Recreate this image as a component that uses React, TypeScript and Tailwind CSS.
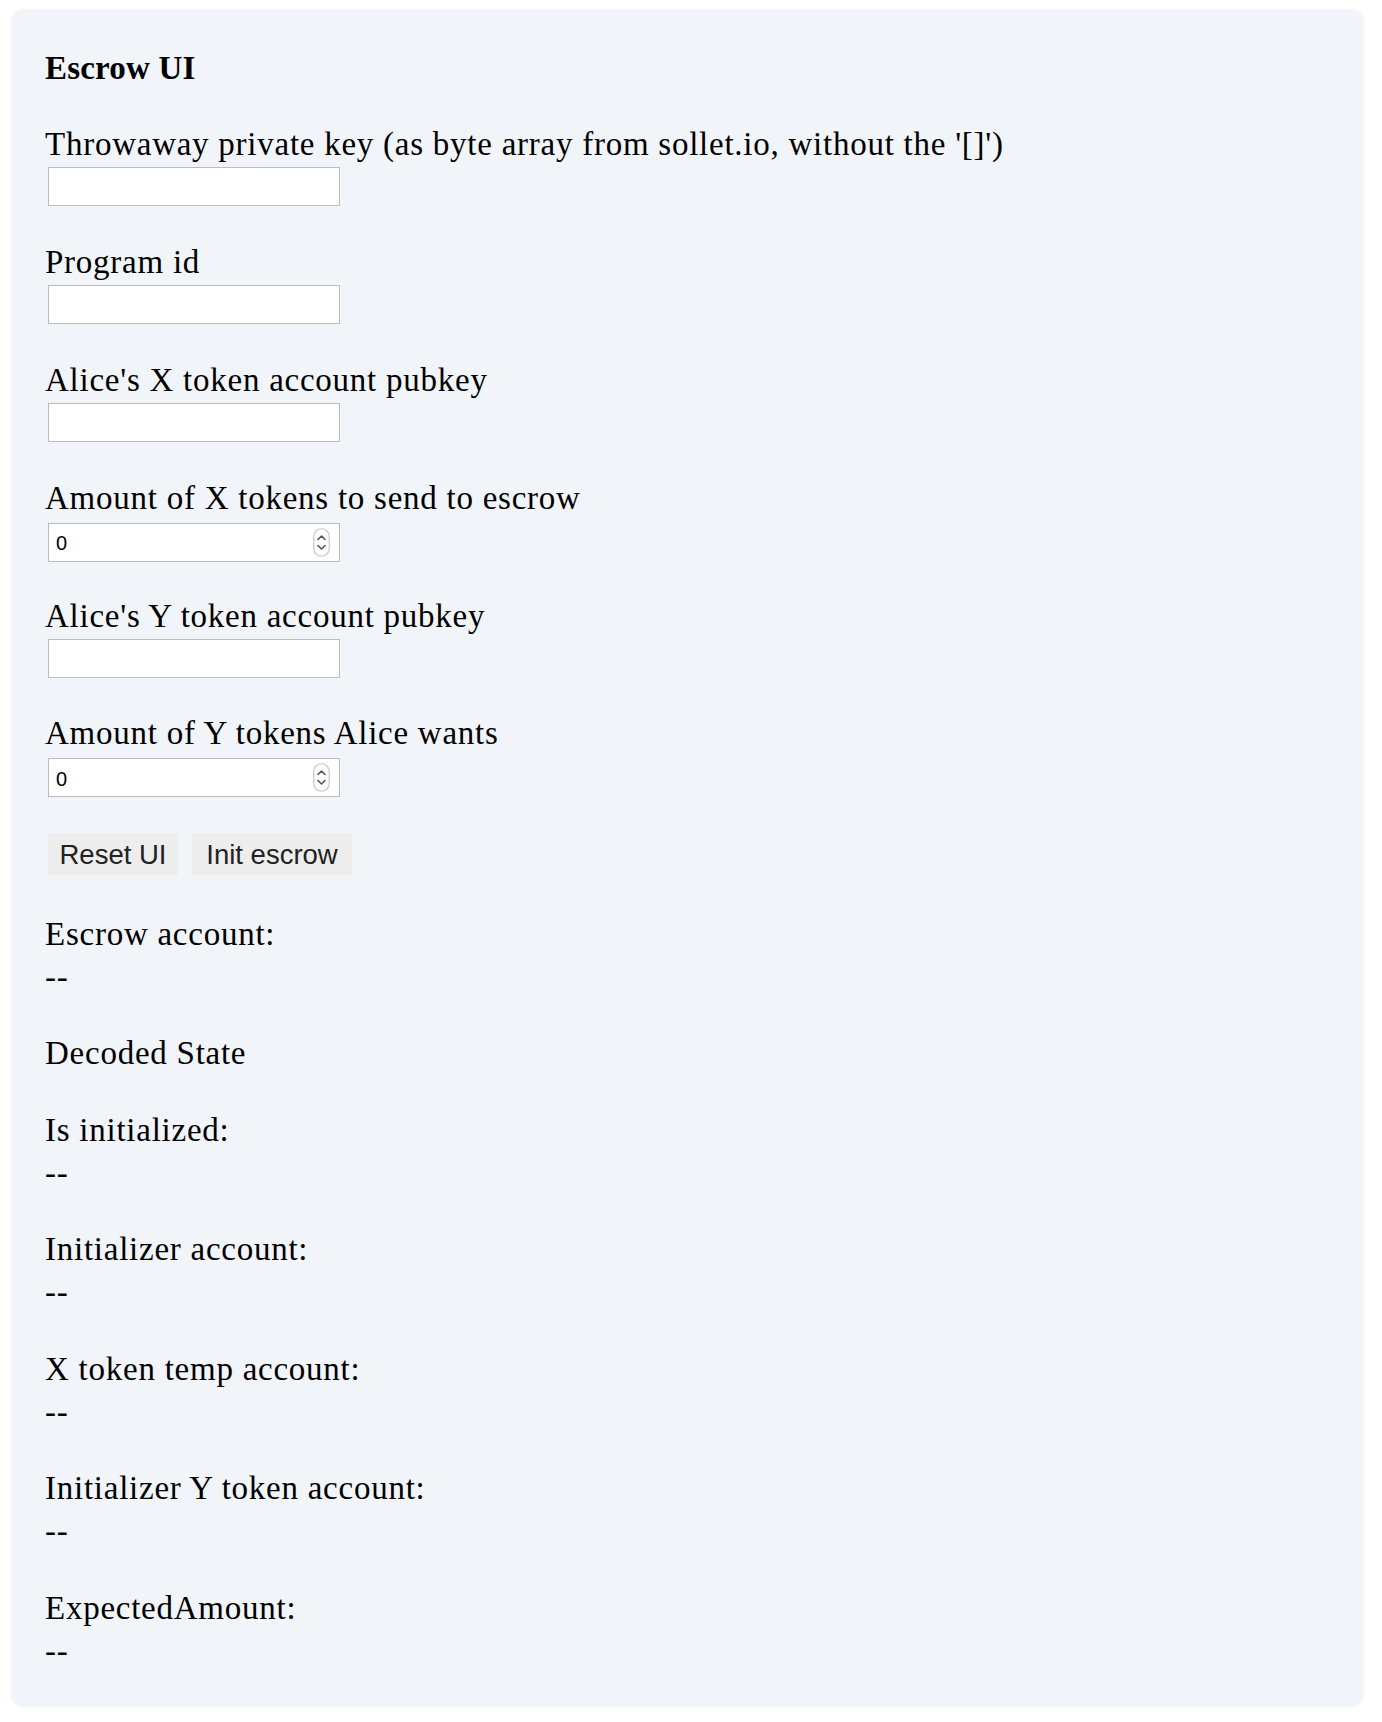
import React from "react";

const serif = { fontFamily: '"Liberation Serif", "Times New Roman", serif' };

const labelCls = "h-[36px] text-[33px] leading-[36px] tracking-[0.75px] text-black whitespace-nowrap";

function TextField({ label }: { label: string }) {
  return (
    <div className="mb-[37.9px]">
      <div className={labelCls}>{label}</div>
      <input
        type="text"
        className="mt-[5px] ml-[3px] block h-[39px] w-[292px] border border-[#bcbcbc] bg-white outline-none"
      />
    </div>
  );
}

function NumberField({ label }: { label: string }) {
  return (
    <div className="mb-[35.9px]">
      <div className={labelCls}>{label}</div>
      <div className="mt-[7px] ml-[3px] flex h-[39px] w-[292px] items-center border border-[#bcbcbc] bg-white">
        <input
          type="text"
          defaultValue="0"
          className="h-full min-w-0 flex-1 bg-transparent pl-[7px] pt-[3px] text-[20px] text-black outline-none"
          style={{ fontFamily: '"Liberation Sans", Arial, sans-serif' }}
        />
        <svg width="17" height="29" viewBox="0 0 17 29" className="mr-[9px] shrink-0">
          <rect x="0.75" y="0.75" width="15.5" height="27.5" rx="7.75" fill="#ffffff" stroke="#c9c9c9" strokeWidth="1.2" />
          <path d="M5 11.5 L8.5 8 L12 11.5" fill="none" stroke="#555555" strokeWidth="1.6" strokeLinecap="round" strokeLinejoin="round" />
          <path d="M5 17.5 L8.5 21 L12 17.5" fill="none" stroke="#555555" strokeWidth="1.6" strokeLinecap="round" strokeLinejoin="round" />
        </svg>
      </div>
    </div>
  );
}

function Info({ label, first }: { label: string; first?: boolean }) {
  return (
    <div className={first ? "" : "mt-[40.5px]"}>
      <div className={labelCls}>{label}</div>
      <div className={"mt-[7px] " + labelCls}>--</div>
    </div>
  );
}

export default function App() {
  return (
    <div className="min-h-[1722px] w-full bg-white pt-[10px]">
      <div
        className="ml-[12px] w-[1351px] rounded-[12px] bg-[#f1f4f9] pl-[33px] pt-[40px] pb-[37px] shadow-[0_0_4px_rgba(0,0,0,0.07)]"
        style={serif}
      >
        <div className="h-[36px] text-[33px] font-bold leading-[36px] tracking-[0.2px] text-black">Escrow UI</div>
        <div className="mt-[40px]">
          <TextField label="Throwaway private key (as byte array from sollet.io, without the '[]')" />
          <TextField label="Program id" />
          <TextField label="Alice's X token account pubkey" />
          <NumberField label="Amount of X tokens to send to escrow" />
          <TextField label="Alice's Y token account pubkey" />
          <NumberField label="Amount of Y tokens Alice wants" />
        </div>
        <div className="mt-[1px] ml-[3px] flex gap-[14px]" style={{ fontFamily: '"Liberation Sans", Arial, sans-serif' }}>
          <button className="h-[42px] w-[130px] bg-[#ededed] text-[27.5px] text-[#222222]">Reset UI</button>
          <button className="h-[42px] w-[160px] bg-[#ededed] text-[27.5px] text-[#222222]">Init escrow</button>
        </div>
        <div className="mt-[40.5px]">
          <Info label="Escrow account:" first />
          <div className={"mt-[40.5px] " + labelCls}>Decoded State</div>
          <Info label="Is initialized:" />
          <Info label="Initializer account:" />
          <Info label="X token temp account:" />
          <Info label="Initializer Y token account:" />
          <Info label="ExpectedAmount:" />
        </div>
      </div>
    </div>
  );
}
